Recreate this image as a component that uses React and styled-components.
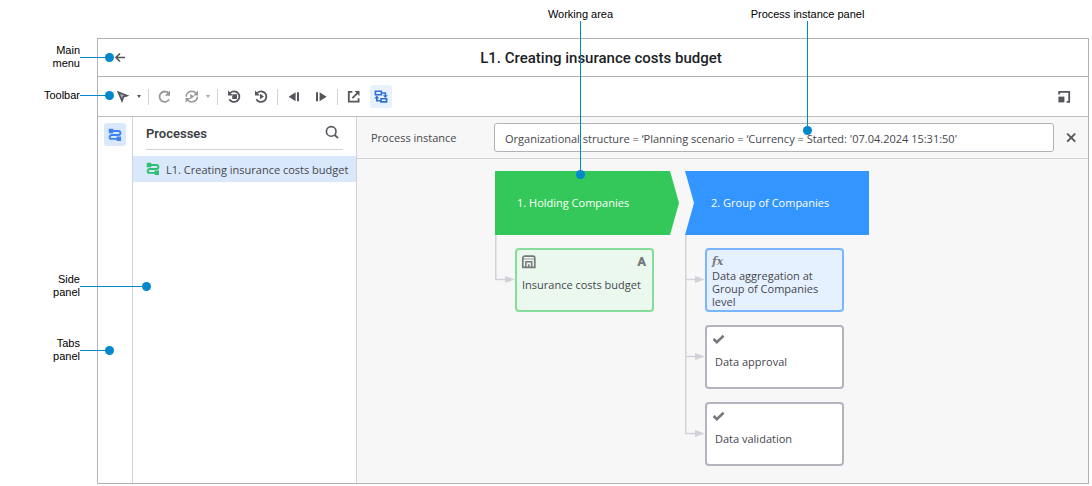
import React, { useState } from 'react';
import styled, { createGlobalStyle, css } from 'styled-components';

const UI_FONT = '"Open Sans", "Noto Sans", sans-serif';
const HEADING_FONT = 'Roboto, sans-serif';
const LABEL_FONT = '"Liberation Sans", Arial, sans-serif';

const FRAME = '#b1b1b9';
const RULE = '#d2d2da';
const TEXT = '#45474d';
const ICON = '#54565c';
const ACCENT = '#0087cd';

const stages = [
	{
		name: '1. Holding Companies',
		kind: 'first',
		steps: [{ name: 'Insurance costs budget', tone: 'green', icon: 'form', auto: true }],
	},
	{
		name: '2. Group of Companies',
		kind: 'next',
		steps: [
			{ name: 'Data aggregation at Group of Companies level', tone: 'blue', icon: 'fx' },
			{ name: 'Data approval', tone: 'plain', icon: 'check' },
			{ name: 'Data validation', tone: 'plain', icon: 'check' },
		],
	},
];

const tones = {
	green: { border: '#86dd9b', fill: '#ebf8ee', indent: 1 },
	blue: { border: '#7ab5ff', fill: '#e6f1ff', indent: 1 },
	plain: { border: '#b4b4bf', fill: '#ffffff', indent: 4 },
};

/* Icons */

const Icon = ({ children, size = 16, label }) => (
	<svg width={size} height={size} viewBox='0 0 16 16' fill='none' stroke='currentColor' aria-label={label} aria-hidden={!label}>
		{children}
	</svg>
);

const ArrowLeft = () => (
	<Icon>
		<path d='M15 7.5H6M10 3.5l-4 4 4 4' strokeWidth='1.7' />
	</Icon>
);

const Pointer = () => (
	<Icon>
		<path d='M3.4 3.2L12 6.6 8.4 7.8 7 11.6z' strokeWidth='1.7' />
		<path d='M3 3l10 4-4.4 1.2L7 13z' fill='currentColor' fillOpacity='0.4' stroke='none' />
	</Icon>
);

const Caret = () => (
	<svg width='4' height='3' viewBox='0 0 4 3' aria-hidden='true'>
		<path d='M0 0h4L2 3z' fill='currentColor' />
	</svg>
);

const Refresh = () => (
	<Icon>
		<path d='M11.4 4A5.2 5.2 0 1 0 12.2 10.4' strokeWidth='1.8' />
		<path d='M13 1.6v5.2H7.8z' fill='currentColor' stroke='none' />
	</Icon>
);

const RefreshPlay = () => (
	<Icon>
		<path d='M2.2 7.6A5.6 5.6 0 0 1 12 4.2M13.4 7.6A5.6 5.6 0 0 1 3.6 11' strokeWidth='1.6' />
		<path d='M14 1.6v4.8H9.2zM1.6 13.8V9h4.8zM6.2 5v5.2L10.2 7.6z' fill='currentColor' stroke='none' />
	</Icon>
);

const RestartStop = () => (
	<Icon>
		<path d='M4.2 4A5.3 5.3 0 1 1 3.4 10.2' strokeWidth='1.8' />
		<path d='M2 1.6v5h5zM6.2 5.2h4.8V10H6.2z' fill='currentColor' stroke='none' />
	</Icon>
);

const RestartPlay = () => (
	<Icon>
		<path d='M4.2 4A5.3 5.3 0 1 1 3.4 10.2' strokeWidth='1.8' />
		<path d='M2 1.6v5h5zM7 4.8v5.4l4-2.7z' fill='currentColor' stroke='none' />
	</Icon>
);

const StepBack = () => (
	<Icon>
		<path d='M9.6 3.2v9L2.6 7.7zM11 3.2h2v9h-2z' fill='currentColor' stroke='none' />
	</Icon>
);

const StepForward = () => (
	<Icon>
		<path d='M3 3.2h2v9H3zM6.6 3.2v9l7-4.5z' fill='currentColor' stroke='none' />
	</Icon>
);

const OpenExternal = () => (
	<Icon>
		<path d='M6.4 2.9H2.8v9.8h9.8V9.2M12 3.6L6.4 9.2' strokeWidth='1.8' />
		<path d='M8.6 2h4.9v4.9z' fill='currentColor' stroke='none' />
	</Icon>
);

const Scheme = () => (
	<Icon>
		<path d='M2.4 2.3h6v3.4h-6zM8 9.7h5.6v3.2H8zM8.4 4h4v3.4M3.8 8.4v3.4H8' strokeWidth='1.6' />
		<path d='M9.8 6.2h5l-2.5 2.8zM1.3 9.4h5L3.8 6.6z' fill='currentColor' stroke='none' />
	</Icon>
);

const Expand = () => (
	<Icon>
		<path d='M3.2 5.6V2.8h10v10h-2.6' strokeWidth='1.8' />
		<path d='M2.4 7.6h6v5.8h-6z' fill='currentColor' stroke='none' />
	</Icon>
);

const Flow = () => (
	<Icon>
		<path d='M5 4h6.4a2 2 0 0 1 0 4H4.6a1.9 1.9 0 0 0 0 3.9H10' strokeWidth='1.9' />
		<path d='M1.8 1.8h4.4v4.4H1.8zM9.6 9.6H14V14H9.6z' fill='currentColor' stroke='none' />
	</Icon>
);

const Search = () => (
	<Icon>
		<circle cx='7.2' cy='6.4' r='4.8' strokeWidth='1.6' />
		<path d='M10.6 9.8l3.4 3.4' strokeWidth='1.8' />
	</Icon>
);

const Close = () => (
	<Icon>
		<path d='M4.2 3.6l8 8M12.2 3.6l-8 8' strokeWidth='1.9' />
	</Icon>
);

const FormIcon = () => (
	<Icon label='Form'>
		<path d='M1.8 13.4V4a1.8 1.8 0 0 1 1.8-1.8h8.4A1.8 1.8 0 0 1 13.8 4v9.4z' strokeWidth='1.7' />
		<path d='M1.8 5h12' strokeWidth='1.2' strokeOpacity='0.6' />
		<path d='M4.9 13V7.7h5.8V13M7.8 10.2V13' strokeWidth='1.5' />
	</Icon>
);

const Check = () => (
	<Icon label='Check'>
		<path d='M2.6 8l3.2 3.2 6.8-6.4' strokeWidth='2.6' />
	</Icon>
);

const Fx = () => <FxMark>fx</FxMark>;

const stepIcons = { form: FormIcon, fx: Fx, check: Check };

/* Diagram */

const Branch = ({ last }) => (
	<svg width='20' height='77' viewBox='0 0 20 77' aria-hidden='true'>
		<path d={last ? 'M0 0V45' : 'M0 0V77'} stroke={RULE} strokeWidth='3' />
		<path d='M0 44.5H12' stroke={RULE} strokeWidth='1.4' />
		<path d='M10 41v7l10-3.5z' fill={RULE} />
	</svg>
);

const StepCard = ({ name, tone, icon, auto }) => {
	const StepIcon = stepIcons[icon];
	return (
		<Card $tone={tone}>
			<CardHead>
				<StepIcon />
				{auto && <AutoMark>A</AutoMark>}
			</CardHead>
			<CardName $tone={tone}>{name}</CardName>
		</Card>
	);
};

const Stage = ({ name, kind, steps }) => (
	<StageColumn>
		<Banner $kind={kind}>{name}</Banner>
		<Steps>
			{steps.map((step, i) => (
				<Step key={step.name}>
					<Branch last={i === steps.length - 1} />
					<StepCard {...step} />
				</Step>
			))}
		</Steps>
	</StageColumn>
);

export default function App() {
	const [instance, setInstance] = useState(
		"Organizational structure = ‘Planning scenario = ‘Currency = Started: '07.04.2024 15:31:50'"
	);

	return (
		<Page>
			<GlobalStyles />
			<Frame>
				<MainMenu>
					<BackButton aria-label='Back'>
						<ArrowLeft />
					</BackButton>
					<Title>L1. Creating insurance costs budget</Title>
				</MainMenu>

				<Toolbar>
					<ToolButton aria-label='Select'><Pointer /></ToolButton>
					<CaretButton aria-label='Select options'><Caret /></CaretButton>
					<Divider />
					<ToolGroup>
						<ToolButton $muted aria-label='Refresh'><Refresh /></ToolButton>
						<ToolButton $muted aria-label='Run'><RefreshPlay /></ToolButton>
					</ToolGroup>
					<CaretButton $muted aria-label='Run options'><Caret /></CaretButton>
					<Divider />
					<ToolGroup>
						<ToolButton aria-label='Stop process'><RestartStop /></ToolButton>
						<ToolButton aria-label='Restart process'><RestartPlay /></ToolButton>
					</ToolGroup>
					<Divider />
					<ToolGroup>
						<ToolButton aria-label='Step back'><StepBack /></ToolButton>
						<ToolButton aria-label='Step forward'><StepForward /></ToolButton>
					</ToolGroup>
					<Divider />
					<ToolGroup>
						<ToolButton aria-label='Open in new window'><OpenExternal /></ToolButton>
						<ToolButton $active aria-label='Scheme'><Scheme /></ToolButton>
					</ToolGroup>
					<Spacer />
					<ToolButton aria-label='Expand'><Expand /></ToolButton>
				</Toolbar>

				<Body>
					<TabsPanel>
						<TabButton aria-label='Processes'><Flow /></TabButton>
					</TabsPanel>

					<SidePanel>
						<SideHeader>
							<SideTitle>Processes</SideTitle>
							<PlainButton aria-label='Search'><Search /></PlainButton>
						</SideHeader>
						<ProcessList>
							<ProcessLink href='#process'>
								<Flow />
								L1. Creating insurance costs budget
							</ProcessLink>
						</ProcessList>
					</SidePanel>

					<Main>
						<InstanceBar>
							<InstanceLabel htmlFor='instance'>Process instance</InstanceLabel>
							<InstanceInput
								id='instance'
								value={instance}
								onChange={e => setInstance(e.target.value)}
							/>
							<PlainButton aria-label='Close' onClick={() => setInstance('')}><Close /></PlainButton>
						</InstanceBar>
						<WorkingArea>
							{stages.map(stage => <Stage key={stage.name} {...stage} />)}
						</WorkingArea>
					</Main>
				</Body>
			</Frame>

			<SideNote $top={44} $reach={114}>
				<NoteText>Main<br />menu</NoteText><NoteLine /><Dot />
			</SideNote>
			<SideNote $top={82} $reach={114}>
				<NoteText>Toolbar</NoteText><NoteLine /><Dot />
			</SideNote>
			<SideNote $top={273} $reach={151}>
				<NoteText>Side<br />panel</NoteText><NoteLine /><Dot />
			</SideNote>
			<SideNote $top={337} $reach={114}>
				<NoteText>Tabs<br />panel</NoteText><NoteLine /><Dot />
			</SideNote>
			<TopNote $left={500} $reach={179}>
				<NoteText>Working area</NoteText><NoteLine $vertical /><Dot />
			</TopNote>
			<TopNote $left={727} $reach={135}>
				<NoteText>Process instance panel</NoteText><NoteLine $vertical /><Dot />
			</TopNote>
		</Page>
	);
}

const GlobalStyles = createGlobalStyle`
	* {
		box-sizing: border-box;
	}

	body {
		margin: 0;
		background: #ffffff;
		color: ${TEXT};
		font-family: ${UI_FONT};
		font-size: 11px;
	}

	button, input {
		font: inherit;
		color: inherit;
	}

	svg {
		display: block;
		flex: none;
	}
`;

const Page = styled.div`
	position: relative;
	display: flex;
	flex-direction: column;
	min-height: 100vh;
	padding: 38px 3px 2px 97px;
`;

const Frame = styled.div`
	flex: 1;
	display: flex;
	flex-direction: column;
	border: 1px solid ${FRAME};
`;

const PlainButton = styled.button`
	display: flex;
	align-items: center;
	justify-content: center;
	padding: 0;
	border: 0;
	background: none;
	color: ${ICON};
	cursor: pointer;
`;

const MainMenu = styled.header`
	display: flex;
	align-items: center;
	height: 38px;
	padding: 0 12px;
	border-bottom: 1px solid ${FRAME};
`;

const BackButton = styled(PlainButton)`
	width: 16px;
`;

const Title = styled.h1`
	flex: 1;
	margin: 0;
	text-align: center;
	font-family: ${HEADING_FONT};
	font-size: 15px;
	font-weight: 500;
	color: #1c1e26;
`;

const Toolbar = styled.div`
	display: flex;
	align-items: center;
	height: 40px;
	padding: 0 13px 0 14px;
	border-bottom: 1px solid #bdbdc4;
`;

const ToolGroup = styled.div`
	display: flex;
	gap: 5px;
`;

const ToolButton = styled(PlainButton)`
	width: 22px;
	height: 23px;
	border-radius: 3px;
	color: ${props => (props.$muted ? '#97989c' : ICON)};

	${props => props.$active && css`
		background: #e8f1fe;
		color: #3170cc;
	`}
`;

const CaretButton = styled(PlainButton)`
	width: 9px;
	height: 23px;
	color: ${props => (props.$muted ? '#a5a6aa' : ICON)};
`;

const Divider = styled.span`
	width: 1px;
	height: 16px;
	margin: 0 5px;
	background: ${RULE};
`;

const Spacer = styled.span`
	flex: 1;
`;

const Body = styled.div`
	flex: 1;
	display: flex;
`;

const TabsPanel = styled.nav`
	width: 35px;
	padding: 6px;
	border-right: 1px solid ${RULE};
`;

const TabButton = styled(PlainButton)`
	width: 22px;
	height: 23px;
	border-radius: 3px;
	background: #dae8fb;
	color: #3c82f0;
`;

const SidePanel = styled.aside`
	width: 224px;
	border-right: 1px solid ${RULE};
`;

const SideHeader = styled.div`
	display: flex;
	align-items: center;
	justify-content: space-between;
	height: 33px;
	margin: 0 13px;
	padding-right: 3px;
	border-bottom: 1px solid ${RULE};
`;

const SideTitle = styled.h2`
	margin: 0;
	font-family: ${HEADING_FONT};
	font-size: 13px;
	font-weight: 600;
	color: #3c3e45;
`;

const ProcessList = styled.nav`
	padding-top: 6px;
`;

const ProcessLink = styled.a`
	display: flex;
	align-items: center;
	gap: 5px;
	height: 26px;
	padding-left: 12px;
	background: #dae8fb;
	color: ${TEXT};
	text-decoration: none;
	white-space: nowrap;

	svg {
		color: #2fbf71;
	}
`;

const Main = styled.main`
	flex: 1;
	display: flex;
	flex-direction: column;
	background: #f7f7f7;
`;

const InstanceBar = styled.div`
	display: flex;
	align-items: center;
	height: 42px;
	padding: 0 9px 0 14px;
	border-bottom: 1px solid ${RULE};
`;

const InstanceLabel = styled.label`
	width: 123px;
`;

const InstanceInput = styled.input`
	flex: 1;
	height: 29px;
	margin-right: 9px;
	padding: 2px 10px 0;
	border: 1px solid ${FRAME};
	border-radius: 3px;
	background: #ffffff;
`;

const WorkingArea = styled.div`
	flex: 1;
	display: flex;
	gap: 6px;
	padding: 12px 12px 17px 138px;
`;

const StageColumn = styled.section`
	width: 184px;
`;

const Banner = styled.h3`
	display: flex;
	align-items: center;
	height: 64px;
	margin: 0;
	padding-bottom: 2px;
	color: #ffffff;
	font-size: 11px;
	font-weight: 400;

	${props => props.$kind === 'first'
		? css`
			padding-left: 22px;
			background: #34c759;
			clip-path: polygon(0 0, 175px 0, 100% 50%, 175px 100%, 0 100%);
		`
		: css`
			padding-left: 26px;
			background: #3395ff;
			clip-path: polygon(0 0, 100% 0, 100% 100%, 0 100%, 9px 50%);
		`}
`;

const Steps = styled.ul`
	margin: 0;
	padding: 0;
	list-style: none;
`;

const Step = styled.li`
	display: flex;
	align-items: flex-start;
`;

const Card = styled.article`
	width: 139px;
	height: 64px;
	margin-top: 13px;
	padding: 4px 4px 0;
	border: 2px solid ${props => tones[props.$tone].border};
	border-radius: 4px;
	background: ${props => tones[props.$tone].fill};
`;

const CardHead = styled.div`
	display: flex;
	align-items: center;
	justify-content: space-between;
	height: 15px;
	color: #77797d;
`;

const FxMark = styled.span`
	padding-left: 1px;
	font-family: "DejaVu Serif", serif;
	font-size: 11px;
	font-style: italic;
	font-weight: 700;
`;

const AutoMark = styled.span`
	padding-right: 2px;
	font-family: ${HEADING_FONT};
	font-size: 13px;
	font-weight: 900;
`;

const CardName = styled.div`
	display: flex;
	align-items: center;
	min-height: 31px;
	padding-left: ${props => tones[props.$tone].indent}px;
	line-height: 13px;
`;

const noteBase = css`
	position: absolute;
	display: flex;
	align-items: center;
	color: #000000;
	font-family: ${LABEL_FONT};
	line-height: 13px;
	pointer-events: none;
`;

const SideNote = styled.div`
	${noteBase}
	top: ${props => props.$top}px;
	left: 0;
	width: ${props => props.$reach}px;
	min-height: 26px;

	> :first-child {
		width: 80px;
		text-align: right;
	}
`;

const TopNote = styled.div`
	${noteBase}
	flex-direction: column;
	top: 8px;
	left: ${props => props.$left}px;
	width: 161px;
	height: ${props => props.$reach - 8}px;
`;

const NoteText = styled.span`
	white-space: nowrap;
`;

const NoteLine = styled.span`
	flex: 1;
	${props => (props.$vertical ? 'width: 1px;' : 'height: 1px;')}
	background: ${ACCENT};
`;

const Dot = styled.span`
	width: 9px;
	height: 9px;
	border-radius: 50%;
	background: ${ACCENT};
`;
